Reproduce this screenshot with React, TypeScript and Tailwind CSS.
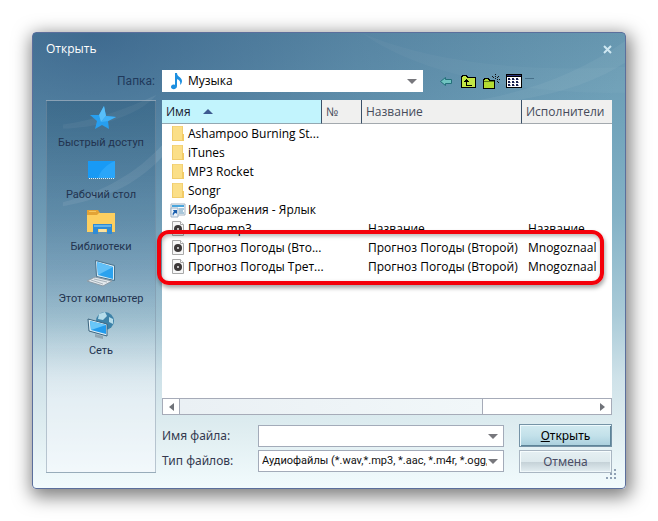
import React from "react";

type Entry = { name: string; kind: "folder" | "shortcut" | "audio"; title?: string; artist?: string };

const entries: Entry[] = [
  { name: "Ashampoo Burning St...", kind: "folder" },
  { name: "iTunes", kind: "folder" },
  { name: "MP3 Rocket", kind: "folder" },
  { name: "Songr", kind: "folder" },
  { name: "Изображения - Ярлык", kind: "shortcut" },
  { name: "Песня.mp3", kind: "audio", title: "Название", artist: "Название" },
  { name: "Прогноз Погоды (Вто...", kind: "audio", title: "Прогноз Погоды (Второй)", artist: "Mnogoznaal" },
  { name: "Прогноз Погоды Трет...", kind: "audio", title: "Прогноз Погоды (Второй)", artist: "Mnogoznaal" },
];

function FolderIcon() {
  return (
    <svg width="16" height="17" viewBox="0 0 16 17" className="shrink-0" aria-hidden="true">
      <path d="M2 1h11v15H2z" fill="#fbdf88" />
      <path d="M2 1h1v15H2zM2 15h11v1H2z" fill="#f0cc6c" />
      <path d="M12 1h1v8h-1z" fill="#f3cf72" />
      <path d="M12 9h2v7h-2z" fill="#f2cb66" />
      <path d="M3 1h9v1H3z" fill="#f4d47c" />
    </svg>
  );
}

function ShortcutIcon() {
  return (
    <svg width="16" height="16" viewBox="0 0 16 16" className="shrink-0" aria-hidden="true">
      <path d="M1 2h14v11H1z" fill="#f8fbfd" stroke="#a3b3c2" />
      <path d="M2 3h12v2H2z" fill="#4aa5dc" />
      <path d="M9 7h5M9 9h4M9 11h5" stroke="#5b93b8" />
      <path d="M1 6h7v9H1z" fill="#eef4fa" stroke="#9db1c4" />
      <path d="M3 14c-1-2 0-4 1-4L3 8h4v4L6 11c-2 0-2 1-3 3z" fill="#1b5fae" />
    </svg>
  );
}

function AudioIcon() {
  return (
    <svg width="16" height="17" viewBox="0 0 16 17" className="shrink-0" aria-hidden="true">
      <path d="M2.5 1.5h8l3 3v11h-11z" fill="#f7f7f7" stroke="#a8a8a8" />
      <path d="M10.5 1.5v3h3" fill="#fff" stroke="#a8a8a8" />
      <circle cx="8" cy="9" r="4" fill="#3c3838" />
      <circle cx="8" cy="9" r="1" fill="#e8e8e8" />
    </svg>
  );
}

function StarIcon() {
  return (
    <svg width="32" height="30" viewBox="0 0 32 30" aria-hidden="true">
      <path d="M19 3l2 10 10 1-8 4 1 8-7-4-7 4 2-8-7-6 9 0z" fill="#279ff0" />
      <path d="M19 3l2 10-5 6-2-7z" fill="#58bffa" />
      <path d="M31 14l-8 4-7 1 5-6z" fill="#40b0f6" />
    </svg>
  );
}

function DesktopIcon() {
  return (
    <svg width="32" height="30" viewBox="0 0 32 30" aria-hidden="true">
      <path d="M3 6h27v17H3z" fill="#189af5" />
      <path d="M30 6v17H13c2-7 8-13 17-17z" fill="#2aa6fa" />
      <path d="M4 23.5h26" stroke="#d9f3ff" strokeDasharray="1 1" />
    </svg>
  );
}

function LibraryIcon() {
  return (
    <svg width="32" height="30" viewBox="0 0 32 30" aria-hidden="true">
      <path d="M2 3h11l2 3h15v19H2z" fill="#e3a336" />
      <path d="M4 4h7v1H4z" fill="#f7c75d" />
      <path d="M2 8h10l2-2h16v19H2z" fill="#fdcf60" />
      <path d="M8 17h19v10h-5v-5h-9v5H8z" fill="#2f8bd6" />
      <path d="M9 18h17v2H9z" fill="#63b3ea" />
      <path d="M14 22h7v3h-7z" fill="#fbe2a0" />
    </svg>
  );
}

function ComputerIcon() {
  return (
    <svg width="32" height="30" viewBox="0 0 32 30" aria-hidden="true">
      <path d="M10.500 1.500l19 5v15l-18-4z" fill="#d8ecf6" stroke="#48708a" />
      <path d="M12 3l16 5v12l-15-4z" fill="#2ba2ee" />
      <path d="M12 3l16 5-15 8z" fill="#62c0f8" />
      <path d="M10 18l17 4-9 5L2 22z" fill="#e3e9ed" stroke="#8d9ba6" />
      <path d="M6 21l12 4M9 20l13 3" stroke="#a9b4bc" />
    </svg>
  );
}

function NetworkIcon() {
  return (
    <svg width="32" height="30" viewBox="0 0 32 30" aria-hidden="true">
      <circle cx="20" cy="10" r="9" fill="#3d82a8" />
      <path d="M14 3l6-2 2 4-4 4-5-1zM24 6l4 2v5l-4-2z" fill="#b5dcea" />
      <path d="M3 8l19 5v12L4 20z" fill="#e2f2fa" stroke="#3b637d" />
      <path d="M5 10l16 4v9L6 19z" fill="#239bec" />
      <path d="M5 10l16 4-15 5z" fill="#69c6f8" />
      <path d="M10 23l8 2v3l-8-2z" fill="#8fa5b2" />
    </svg>
  );
}

const places = [
  { label: "Быстрый доступ", icon: <StarIcon /> },
  { label: "Рабочий стол", icon: <DesktopIcon /> },
  { label: "Библиотеки", icon: <LibraryIcon /> },
  { label: "Этот компьютер", icon: <ComputerIcon /> },
  { label: "Сеть", icon: <NetworkIcon /> },
];

function Caret() {
  return (
    <svg width="10" height="5" viewBox="0 0 10 5" className="pointer-events-none absolute right-[6px]" aria-hidden="true">
      <path d="M0 0h10L5 5z" fill="#77777c" />
    </svg>
  );
}

function Toolbar() {
  return (
    <div className="flex w-[189px] items-center pl-3">
      <button aria-label="Назад" className="flex h-6 w-[22px] items-center justify-center">
        <svg width="12" height="11" viewBox="0 0 12 11">
          <path d="M.5 5.500l5-4v2h6v4h-6v2z" fill="#6fc3c0" stroke="#24707a" />
        </svg>
      </button>
      <button aria-label="На уровень вверх" className="flex h-6 w-[23px] items-center justify-center">
        <svg width="15" height="13" viewBox="0 0 15 13" shapeRendering="crispEdges">
          <path d="M.5 2.500l1-2h4l1 2h8v10H.5z" fill="#c3e645" stroke="#000" />
          <path d="M5.500 6v4H11" fill="none" stroke="#000" strokeWidth="1" />
          <path d="M3 7l2-3h1l2 3z" fill="#000" />
        </svg>
      </button>
      <button aria-label="Новая папка" className="flex h-6 w-[23px] items-center justify-center">
        <svg width="17" height="15" viewBox="0 0 17 15" shapeRendering="crispEdges">
          <path d="M.5 6.500l1-2h4l1 2h5v8H.5z" fill="#b4dc32" stroke="#000" />
          <path d="M1 7.500h10" stroke="#5c7a18" />
          <path d="M12 0h1v1h-1zM12 2h1v1h-1zM9 2h1v1H9zM10 3h1v1h-1zM15 2h1v1h-1zM14 3h1v1h-1zM14 5h1v1h-1zM16 5h1v1h-1zM14 7h1v1h-1zM15 8h1v1h-1zM12 4h1v1h-1z" fill="#111" />
        </svg>
      </button>
      <button aria-label="Вид" className="flex h-6 items-center gap-[3px] pl-[3px]">
        <svg width="16" height="14" viewBox="0 0 16 14" shapeRendering="crispEdges">
          <path d="M0 0h16v14H0z" fill="#000" />
          <path d="M1 1h14v1H1z" fill="#27317d" />
          <path d="M1 3h14v10H1z" fill="#fff" />
          <path d="M2 4h2v2H2zM6 4h2v2H6zM10 4h2v2h-2zM2 7h2v2H2zM6 7h2v2H6zM10 7h2v2h-2zM2 10h2v2H2zM6 10h2v2H6zM10 10h2v2h-2z" fill="#18204e" />
          <path d="M4 5h1v1H4zM8 5h1v1H8zM12 5h1v1h-1zM4 8h1v1H4zM8 8h1v1H8zM12 8h1v1h-1zM4 11h1v1H4zM8 11h1v1H8zM12 11h1v1h-1z" fill="#8a93b4" />
        </svg>
        <svg width="9" height="8" viewBox="0 0 9 8" shapeRendering="crispEdges">
          <path d="M0 1.500h9" stroke="#47708a" />
        </svg>
      </button>
    </div>
  );
}

function FileList() {
  return (
    <div className="relative h-[315px] bg-white">
      <div className="flex h-full flex-col">
        <table className="w-full table-fixed border-separate border-spacing-0 text-left font-['Open_Sans','Noto_Sans',sans-serif] whitespace-nowrap text-black">
          <colgroup>
            <col className="w-[160px]" />
            <col className="w-10" />
            <col className="w-[160px]" />
            <col />
          </colgroup>
          <thead>
            <tr className="h-6 bg-[#f0f0ef] text-[#454b5a]">
              <th className="border-r border-b border-r-[#3a5068] border-b-[#93a8b2] bg-[#c2f4fd] p-0 pl-1 font-normal text-[#16202e]">
                <span className="flex items-center gap-3">
                  Имя
                  <svg width="10" height="5" viewBox="0 0 10 5" aria-hidden="true">
                    <path d="M5 0l5 5H0z" fill="#3d5a90" />
                  </svg>
                </span>
              </th>
              <th className="border-r border-b border-r-[#3a5068] border-b-[#a3a9ae] p-0 pl-1 font-normal">№</th>
              <th className="border-r border-b border-r-[#3a5068] border-b-[#a3a9ae] p-0 pl-1 font-normal">Название</th>
              <th className="border-b border-b-[#a3a9ae] p-0 pl-1 font-normal">Исполнители</th>
            </tr>
          </thead>
          <tbody>
            {entries.map((e) => (
              <tr key={e.name} className="h-[19px]">
                <td className="p-0 pl-2">
                  <span className="flex h-[19px] items-center gap-[2px]">
                    {e.kind === "folder" && <FolderIcon />}
                    {e.kind === "shortcut" && <ShortcutIcon />}
                    {e.kind === "audio" && <AudioIcon />}
                    {e.name}
                  </span>
                </td>
                <td className="p-0" />
                <td className="p-0 pl-[6px]">{e.title}</td>
                <td className="p-0 pl-[6px]">{e.artist}</td>
              </tr>
            ))}
          </tbody>
        </table>
        <div className="mt-auto flex h-[17px] border border-[#a6abb8] bg-white">
          <button aria-label="Прокрутить влево" className="flex w-[17px] items-center justify-center border-r border-[#a6abb8]">
            <svg width="5" height="8" viewBox="0 0 5 8">
              <path d="M5 0v8L0 4z" fill="#707379" />
            </svg>
          </button>
          <div className="w-[303px] border-r border-[#a6abb8] bg-linear-to-r from-[#eaf0f4] to-[#f1f7f9]" />
          <button aria-label="Прокрутить вправо" className="ml-auto flex w-[17px] items-center justify-center">
            <svg width="5" height="8" viewBox="0 0 5 8">
              <path d="M0 0v8l5-4z" fill="#707379" />
            </svg>
          </button>
        </div>
      </div>
      <div className="pointer-events-none absolute top-[130px] right-2 -left-[5px] h-[55px] rounded-xl border-4 border-[#f4000a] shadow-[1px_3px_4px_rgba(0,0,0,0.35),inset_1px_2px_4px_rgba(0,0,0,0.3)]" />
    </div>
  );
}

function FileForm() {
  return (
    <form className="mt-[9px] flex items-center gap-[15px]">
      <div className="flex min-w-0 flex-1 flex-col gap-[3px]">
        <div className="flex items-center">
          <label htmlFor="file-name" className="w-24 text-[#34394f]">Имя файла:</label>
          <div className="relative flex min-w-0 flex-1 items-center">
            <input id="file-name" type="text" className="h-[22px] w-full border border-[#a3abb9] bg-white px-1 outline-none" />
            <Caret />
          </div>
        </div>
        <div className="flex items-center">
          <label htmlFor="file-type" className="w-24 text-[#34394f]">Тип файлов:</label>
          <div className="relative flex min-w-0 flex-1 items-center">
            <select id="file-type" className="h-[22px] w-full appearance-none border border-[#a3abb9] bg-white pr-4 pl-[3px] font-[Roboto,sans-serif] text-[11px] text-[#111]">
              <option>Аудиофайлы (*.wav,*.mp3, *.aac, *.m4r, *.ogg,</option>
            </select>
            <Caret />
          </div>
        </div>
      </div>
      <div className="flex w-[93px] flex-col gap-[3px]">
        <button type="submit" className="h-[23px] border border-[#7593a6] bg-linear-to-b from-[#d2eaf0] via-[#c3e1ea] to-[#a9cfdd] text-black shadow-[inset_1px_1px_0_#eefafd,inset_-1px_-1px_0_#5d8498]">
          <u>О</u>ткрыть
        </button>
        <button type="button" className="h-[23px] border border-[#a9b6c2] bg-[linear-gradient(180deg,#e6f0f3_0%,#dde9ed_50%,#c5d2d8_54%,#e3eef2_100%)] text-[#4a4d66] shadow-[inset_1px_1px_0_#f6fcfd,inset_-1px_-1px_0_#f0f8fa]">
          Отмена
        </button>
      </div>
    </form>
  );
}

function Aurora() {
  return (
    <svg viewBox="0 0 594 457" preserveAspectRatio="none" className="pointer-events-none absolute inset-0 -z-10 h-full w-full" aria-hidden="true">
      <path d="M30 92C60 88 95 76 124 62C106 84 60 96 30 96z" fill="#fff" opacity="0.07" />
      <path d="M30 170C70 160 105 140 130 112V124C100 156 70 166 30 174z" fill="#fff" opacity="0.1" />
      <path d="M430 70C490 62 550 40 594 8V30C550 58 500 68 430 74z" fill="#fff" opacity="0.05" />
      <path d="M330 0C400 30 500 40 594 34V60C500 62 390 44 330 0z" fill="#fff" opacity="0.03" />
    </svg>
  );
}

export default function App() {
  return (
    <div className="bg-white p-8 font-['Noto_Sans',sans-serif] text-[12px] leading-4">
      <main className="relative isolate rounded border border-[#5b6f9c] bg-[radial-gradient(ellipse_90%_75%_at_10%_0%,rgba(14,52,104,0.45),rgba(40,80,125,0.26)_50%,rgba(80,130,160,0)),linear-gradient(180deg,#6797b0_0%,#72a4bb_20%,#84b2c6_40%,#aacbd8_62%,#cfe2e9_76%,#e0eef1_88%,#f2fbfd_100%)] px-[13px] pb-[15px] shadow-[2px_5px_18px_3px_rgba(0,0,0,0.5)]">
        <Aurora />
        <header className="flex h-[37px] items-center justify-between pb-[5px]">
          <h1 className="font-['Open_Sans',sans-serif] text-white">Открыть</h1>
          <button aria-label="Закрыть" className="flex h-4 w-[10px] items-center justify-center">
            <svg width="9" height="9" viewBox="0 0 9 9">
              <path d="M1 1l7 7M8 1L1 8" stroke="#cfe8f2" strokeWidth="2" />
            </svg>
          </button>
        </header>
        <div className="flex h-[22px] items-center">
          <label htmlFor="folder" className="w-[116px] pr-[7px] text-right font-[Roboto,sans-serif] text-[#213a5c]">Папка:</label>
          <div className="relative flex h-[22px] flex-1 items-center bg-white">
            <svg width="13" height="18" viewBox="0 0 13 18" className="pointer-events-none absolute left-2" aria-hidden="true">
              <path d="M5 1h2c0 4 5 4 5 8 0 2-1 3-2 4 1-4-1-5-3-6v7c0 4-6 4-6 1 0-2 2-3 4-2z" fill="#1d8fe0" />
            </svg>
            <select id="folder" className="h-full w-full appearance-none bg-transparent pl-[26px] font-['Open_Sans',sans-serif] text-black">
              <option>Музыка</option>
            </select>
            <Caret />
          </div>
          <Toolbar />
        </div>
        <div className="mt-2 flex gap-[6px]">
          <nav className="flex w-[110px] flex-col border border-[#7f93a6]/50 bg-[linear-gradient(180deg,rgba(20,66,96,0.28),rgba(50,90,140,0.16)_45%,rgba(140,170,190,0.1)_60%,rgba(250,250,255,0.4)_80%)] pt-[2px] font-[Roboto,sans-serif] text-[11px] text-[#22334f]">
            {places.map((p) => (
              <button key={p.label} className="flex h-[52px] flex-col items-center gap-[2px] whitespace-nowrap">
                {p.icon}
                <span>{p.label}</span>
              </button>
            ))}
          </nav>
          <div className="flex min-w-0 flex-1 flex-col">
            <FileList />
            <FileForm />
          </div>
        </div>
        <svg width="12" height="12" viewBox="0 0 12 12" className="absolute right-2 bottom-2" shapeRendering="crispEdges" aria-hidden="true">
          <path d="M9 1h2v2H9zM5 5h2v2H5zM9 5h2v2H9zM1 9h2v2H1zM5 9h2v2H5zM9 9h2v2H9z" fill="#8fa0b4" />
        </svg>
      </main>
    </div>
  );
}
